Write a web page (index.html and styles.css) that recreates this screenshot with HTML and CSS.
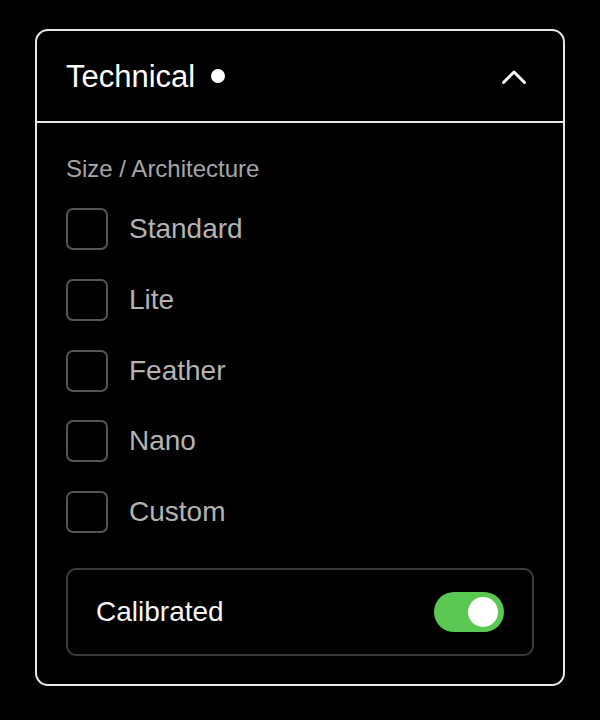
FILE: index.html
```html
<!DOCTYPE html>
<html lang="en">
<head>
<meta charset="utf-8">
<link rel="stylesheet" href="styles.css">
</head>
<body>
<section class="card">
  <header class="card-header">
    <h2 class="title">Technical <span class="dot"></span></h2>
    <svg class="chevron" width="24" height="16" viewBox="0 0 24 16" aria-hidden="true">
      <polyline points="1.5,13.5 12,3 22.5,13.5" fill="none" stroke="#fff" stroke-width="3" stroke-linecap="round" stroke-linejoin="round"/>
    </svg>
  </header>
  <div class="card-body">
    <div class="group-label">Size / Architecture</div>
    <ul class="options">
      <li class="option"><span class="box"></span><span class="opt-label">Standard</span></li>
      <li class="option"><span class="box"></span><span class="opt-label">Lite</span></li>
      <li class="option"><span class="box"></span><span class="opt-label">Feather</span></li>
      <li class="option"><span class="box"></span><span class="opt-label">Nano</span></li>
      <li class="option"><span class="box"></span><span class="opt-label">Custom</span></li>
    </ul>
    <div class="toggle-row">
      <span class="toggle-label">Calibrated</span>
      <span class="switch"><span class="knob"></span></span>
    </div>
  </div>
</section>
</body>
</html>
```

FILE: styles.css
```css
* { box-sizing: border-box; }
html, body { margin: 0; background: #000; }
body {
  padding: 29px 35px;
  font-family: "Liberation Sans", Arial, sans-serif;
  color: #fff;
}
.card {
  width: 530px;
  border: 2px solid #e8e8e8;
  border-radius: 13px;
  background: #000;
}
.card-header {
  height: 92px;
  display: flex;
  align-items: center;
  justify-content: space-between;
  padding: 0 29px 0 29px;
  border-bottom: 2px solid #e8e8e8;
}
.title {
  margin: 0;
  font-size: 31px;
  font-weight: 400;
  line-height: 31px;
  display: flex;
  align-items: center;
  gap: 16px;
  color: #fff;
}
.dot {
  width: 14px;
  height: 14px;
  border-radius: 50%;
  background: #fff;
}
.chevron { margin-right: 8px; margin-top: 1px; }
.card-body {
  padding: 32px 29px 28px 29px;
}
.group-label {
  font-size: 24px;
  line-height: 28px;
  color: #a6a6a6;
}
.options {
  list-style: none;
  margin: 25px 0 0 0;
  padding: 0;
  display: flex;
  flex-direction: column;
  gap: 28.75px;
}
.option {
  display: flex;
  align-items: center;
  gap: 21px;
  height: 42px;
}
.box {
  width: 42px;
  height: 42px;
  border: 2px solid #555;
  border-radius: 7px;
  flex: none;
}
.opt-label {
  font-size: 28px;
  line-height: 32px;
  color: #b3b3b3;
}
.toggle-row {
  margin-top: 35px;
  height: 88px;
  border: 2px solid #3a3a3a;
  border-radius: 10px;
  display: flex;
  align-items: center;
  justify-content: space-between;
  padding: 0 28px;
}
.toggle-label {
  font-size: 28px;
  line-height: 32px;
  color: #f5f5f5;
}
.switch {
  width: 70px;
  height: 40px;
  border-radius: 20px;
  background: #5bc853;
  display: flex;
  align-items: center;
  justify-content: flex-end;
  padding: 0 6px;
}
.knob {
  width: 30px;
  height: 30px;
  border-radius: 50%;
  background: #fff;
}
```
